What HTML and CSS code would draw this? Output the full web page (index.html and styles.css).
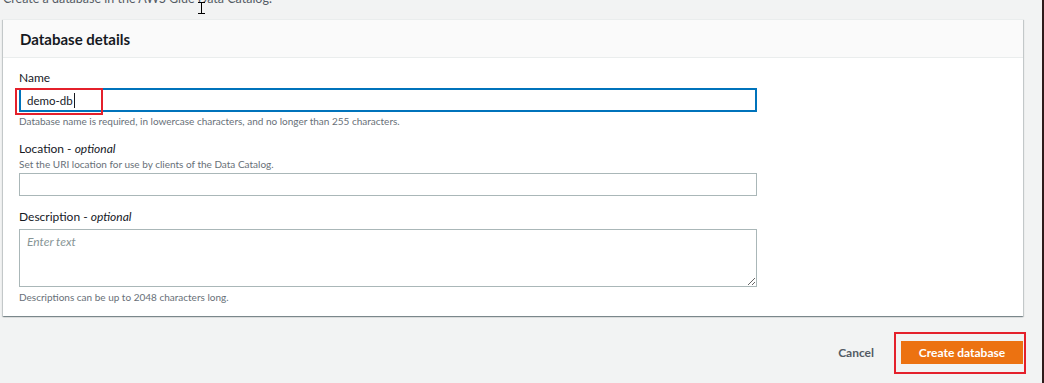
FILE: index.html
```html
<!DOCTYPE html>
<html lang="en">
<head>
  <meta charset="UTF-8" />
  <title>Create database</title>
  <link rel="stylesheet" href="styles.css">
</head>
<body>
  <div class="page">
    <p class="intro">Create a database in the AWS Glue Data Catalog.</p>

    <div class="card">
      <div class="card-header">
        <h2>Database details</h2>
      </div>
      <div class="card-body">
        <div class="field">
          <label class="label">Name</label>
          <div class="input-wrap">
            <div class="input focused"><span class="value">demo-db</span><span class="caret"></span></div>
            <div class="mark mark-name"></div>
          </div>
          <div class="hint">Database name is required, in lowercase characters, and no longer than 255 characters.</div>
        </div>

        <div class="field">
          <label class="label">Location - <i>optional</i></label>
          <div class="desc">Set the URI location for use by clients of the Data Catalog.</div>
          <div class="input"></div>
        </div>

        <div class="field">
          <label class="label">Description - <i>optional</i></label>
          <textarea class="textarea" placeholder="Enter text"></textarea>
          <div class="hint">Descriptions can be up to 2048 characters long.</div>
        </div>
      </div>
    </div>

    <div class="actions">
      <button class="btn-link">Cancel</button>
      <div class="primary-wrap">
        <button class="btn-primary">Create database</button>
        <div class="mark mark-btn"></div>
      </div>
    </div>
  </div>

  <svg class="cursor" width="9" height="12" viewBox="0 0 9 12">
    <path d="M1 0.5h7M4.5 0.5v11M1 11.5h7" stroke="#000" stroke-width="1" fill="none"/>
  </svg>
</body>
</html>
```

FILE: styles.css
```css
body {
  margin: 0;
  font-family: Lato, 'Open Sans', sans-serif;
  background-color: #f2f3f3;
  color: #16191f;
  height: 383px;
  overflow: hidden;
  border-right: 2px solid #2e1b1b;
  position: relative;
}

.page {
  padding: 0 19px 0 3px;
}

.intro {
  margin: -9px 0 12px;
  font-size: 12.5px;
  line-height: 16px;
  color: #545b64;
}

.card {
  background: #fff;
  box-shadow: 0 1px 1px 0 rgba(0, 28, 36, 0.3), 1px 1px 1px 0 rgba(0, 28, 36, 0.15), -1px 1px 1px 0 rgba(0, 28, 36, 0.15);
  border-top: 1px solid #eaeded;
}

.card-header {
  background: #fafafa;
  border-bottom: 1px solid #eaeded;
  height: 37px;
  display: flex;
  align-items: center;
  padding: 0 17px;
}

.card-header h2 {
  margin: 0;
  font-size: 15px;
  font-weight: 700;
}

.card-body {
  padding: 12px 16px 12px;
  display: flex;
  flex-direction: column;
  gap: 13px;
}

.field {
  display: flex;
  flex-direction: column;
  width: 738px;
}

.label {
  font-size: 12px;
  line-height: 16px;
}

.label i {
  font-style: italic;
}

.desc,
.hint {
  font-size: 10px;
  line-height: 14px;
  color: #687078;
}

.hint {
  margin-top: 2px;
}

.input-wrap {
  position: relative;
  margin-top: 2px;
}

.input {
  box-sizing: border-box;
  height: 23px;
  border: 1px solid #aab7b8;
  background: #fff;
  display: flex;
  align-items: center;
  padding: 0 8px;
  font-size: 11.5px;
}

.desc + .input {
  margin-top: 2px;
}

.input.focused {
  height: 24px;
  border: 2px solid #0073bb;
  padding-left: 6px;
}

.caret {
  display: inline-block;
  width: 1px;
  height: 15px;
  margin-left: 1px;
  background: #16191f;
}

.textarea {
  margin-top: 4px;
  box-sizing: border-box;
  height: 58px;
  border: 1px solid #aab7b8;
  padding: 4px 7px;
  font-family: inherit;
  font-size: 12px;
  resize: vertical;
}

.textarea::placeholder {
  font-style: italic;
  color: #879596;
}

.textarea + .hint {
  margin-top: 3px;
}

.actions {
  display: flex;
  justify-content: flex-end;
  align-items: center;
  gap: 27px;
  margin-top: 25px;
}

.btn-link {
  background: none;
  border: none;
  padding: 0;
  font-family: inherit;
  font-size: 12px;
  font-weight: 700;
  color: #545b64;
}

.primary-wrap {
  position: relative;
}

.btn-primary {
  display: block;
  width: 122px;
  height: 23px;
  background: #ec7211;
  border: none;
  color: #fff;
  font-family: inherit;
  font-size: 12px;
  font-weight: 700;
  padding: 0;
}

.mark {
  position: absolute;
  border: 2px solid #e4202b;
}

.mark-name {
  left: -4px;
  top: 0;
  width: 84px;
  height: 23px;
}

.mark-btn {
  left: -7px;
  top: -9px;
  width: 128px;
  height: 38px;
}

.cursor {
  position: absolute;
  left: 197px;
  top: 2px;
}
```
